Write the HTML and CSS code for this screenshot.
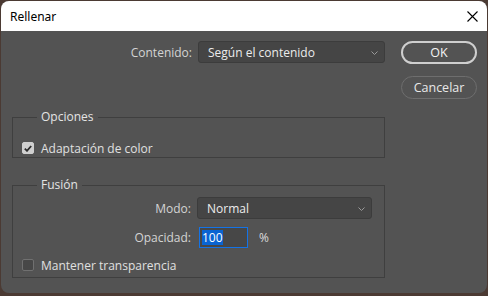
FILE: index.html
```html
<!DOCTYPE html>
<html lang="es">
<head>
    <meta charset="UTF-8">
    <title>Rellenar</title>
    <link rel="stylesheet" href="styles.css">
</head>
<body>
    <div class="dialog">
        <div class="titlebar">
            <span class="title">Rellenar</span>
            <svg class="close" width="11" height="11" viewBox="0 0 11 11">
                <path d="M0.5 0.5 L10.5 10.5 M10.5 0.5 L0.5 10.5" stroke="#000" stroke-width="1.1" fill="none"/>
            </svg>
        </div>

        <div class="content">
            <div class="main">
                <!-- Contenido -->
                <div class="row row-top">
                    <label class="field-label">Contenido:</label>
                    <div class="select select-wide">
                        <span>Según el contenido</span>
                        <svg class="chevron" width="7" height="4" viewBox="0 0 7 4"><path d="M0.5 0.5 L3.5 3.5 L6.5 0.5" stroke="#9a9a9a" fill="none"/></svg>
                    </div>
                </div>

                <!-- Opciones -->
                <fieldset class="group group-options">
                    <legend>Opciones</legend>
                    <div class="check-row">
                        <span class="checkbox checked">
                            <svg width="8" height="7" viewBox="0 0 8 7"><path d="M0.8 3.6 L3 5.8 L7.2 1" stroke="#2b2b2b" stroke-width="1.8" fill="none"/></svg>
                        </span>
                        <span class="check-label">Adaptación de color</span>
                    </div>
                </fieldset>

                <!-- Fusión -->
                <fieldset class="group group-blend">
                    <legend>Fusión</legend>
                    <div class="row">
                        <label class="field-label field-label-inner">Modo:</label>
                        <div class="select select-mode">
                            <span>Normal</span>
                            <svg class="chevron" width="7" height="4" viewBox="0 0 7 4"><path d="M0.5 0.5 L3.5 3.5 L6.5 0.5" stroke="#9a9a9a" fill="none"/></svg>
                        </div>
                    </div>
                    <div class="row row-opacity">
                        <label class="field-label field-label-inner">Opacidad:</label>
                        <div class="number-input"><span class="selected">100</span></div>
                        <span class="unit">%</span>
                    </div>
                    <div class="check-row check-row-last">
                        <span class="checkbox"></span>
                        <span class="check-label">Mantener transparencia</span>
                    </div>
                </fieldset>
            </div>

            <div class="buttons">
                <button class="btn btn-primary">OK</button>
                <button class="btn">Cancelar</button>
            </div>
        </div>
    </div>
</body>
</html>
```

FILE: styles.css
```css
body {
    margin: 0;
    background: #4b3a33;
    font-family: 'Open Sans', 'Noto Sans', sans-serif;
    font-size: 12px;
    color: #dcdcdc;
}

.dialog {
    width: 486px;
    height: 292px;
    margin: 1px 0 0 1px;
    background: #535353;
    border-radius: 8px;
    overflow: hidden;
}

.titlebar {
    height: 30px;
    background: #ffffff;
    display: flex;
    align-items: center;
    justify-content: space-between;
    padding: 0 9px 0 9px;
}

.title {
    font-family: 'Noto Sans', sans-serif;
    font-size: 12px;
    color: #000;
}

.content {
    display: flex;
    padding: 10px 0 0 11px;
}

.main {
    width: 373px;
}

.row {
    display: flex;
    align-items: center;
    height: 22px;
}

.row-top {
    margin-bottom: 46px;
}

.field-label {
    width: 180px;
    text-align: right;
    margin-right: 6px;
    color: #d4d4d4;
}

.field-label-inner {
    width: 169px;
}

.select {
    box-sizing: border-box;
    height: 22px;
    background: #454545;
    border: 1px solid #3c3c3c;
    border-radius: 3px;
    display: flex;
    align-items: center;
    justify-content: space-between;
    padding: 0 6px 0 9px;
    color: #ececec;
}

.select-wide {
    width: 187px;
}

.select-mode {
    width: 175px;
}

.chevron {
    margin-top: 1px;
}

.group {
    margin: 0;
    padding: 0 8px 0 9px;
    border: 1px solid #3f3f3f;
    box-sizing: border-box;
    width: 373px;
}

.group legend {
    padding: 0 4px;
    margin-left: 15px;
    line-height: 16px;
    color: #e4e4e4;
}

.group-options {
    height: 49px;
    margin-bottom: 19px;
}

.group-blend {
    height: 101px;
    padding-top: 4px;
}

.group-options .check-row {
    margin-top: 15px;
}

.check-row {
    display: flex;
    align-items: center;
    height: 16px;
}

.check-row-last {
    margin-top: 9px;
}

.checkbox {
    width: 12px;
    height: 12px;
    box-sizing: border-box;
    border: 1px solid #707070;
    border-radius: 2px;
    background: #474747;
    display: flex;
    align-items: center;
    justify-content: center;
    margin-right: 7px;
}

.checkbox.checked {
    background: #cfcfcf;
    border-color: #cfcfcf;
}

.check-label {
    color: #e0e0e0;
}

.row-opacity {
    margin-top: 8px;
    height: 21px;
}

.number-input {
    width: 49px;
    height: 21px;
    box-sizing: border-box;
    border: 1px solid #1473e6;
    background: #474747;
    display: flex;
    align-items: center;
    padding-left: 2px;
    margin-left: 2px;
}

.selected {
    background: #0a64d2;
    color: #ffffff;
    line-height: 15px;
}

.unit {
    margin-left: 11px;
    color: #dcdcdc;
}

.buttons {
    display: flex;
    flex-direction: column;
    gap: 12px;
    margin-left: 16px;
}

.btn {
    width: 76px;
    height: 23px;
    border-radius: 12px;
    background: transparent;
    border: 1px solid #6e6e6e;
    color: #e8e8e8;
    font-family: 'Open Sans', 'Noto Sans', sans-serif;
    font-size: 12.5px;
    padding: 0;
}

.btn-primary {
    border: 2px solid #cfcfcf;
    color: #f4f4f4;
}
```
